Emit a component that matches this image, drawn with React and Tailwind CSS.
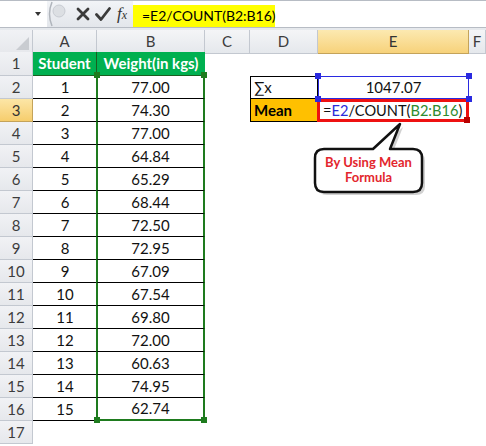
import React from 'react';

const weights = ['77.00', '74.30', '77.00', '64.84', '65.29', '68.44', '72.50', '72.95', '67.09', '67.54', '69.80', '72.00', '60.63', '74.95', '62.74'];
const cols = ['A', 'B', 'C', 'D', 'E', 'F'];
const rows = Array.from({ length: 17 }, (_, i) => i + 1);

const gridCols = 'grid grid-cols-[33px_64px_108px_45px_68px_151px_1fr]';

const FormulaBar = () => (
    <div className="flex h-[28px] border-t border-b border-[#b7bcc4] bg-white">
        {/* name box */}
        <div className="flex items-center justify-end w-[47px] pr-[6px] bg-white">
            <div className="w-0 h-0 border-l-[3px] border-r-[3px] border-t-[4px] border-l-transparent border-r-transparent border-t-[#333]" />
        </div>
        {/* buttons */}
        <div className="flex items-center gap-[5px] w-[86px] bg-linear-to-b from-[#f2f4f7] to-[#e3e6eb]">
            <svg width="20" height="26" viewBox="0 0 20 26">
                <path d="M5 1 Q0 13 5 25" stroke="#b0b5bc" strokeWidth="1.5" fill="none" />
                <circle cx="12" cy="10" r="6" fill="#dcdfe3" stroke="#c8ccd2" />
            </svg>
            <svg width="14" height="14" viewBox="0 0 14 14" className="ml-[4px]">
                <path d="M2 2 L12 12 M12 2 L2 12" stroke="#3a3a3a" strokeWidth="2.8" strokeLinecap="round" />
            </svg>
            <svg width="16" height="14" viewBox="0 0 16 14">
                <path d="M1.5 7.5 L6 12.5 L14.5 1.5" stroke="#3a3a3a" strokeWidth="2.8" fill="none" strokeLinecap="round" strokeLinejoin="round" />
            </svg>
            <span className="ml-[1px] font-['Liberation_Serif',serif] italic text-[17px] text-[#333] leading-[22px]">
                f<span className="text-[12px]">x</span>
            </span>
        </div>
        {/* formula input */}
        <div className="flex-1 flex items-end bg-white">
            <div className="h-[22px] w-[142px] bg-[#ffff00] pl-[9px] text-[14px] leading-[22px] text-black">=E2/COUNT(B2:B16)</div>
        </div>
    </div>
);

const ColHeader = ({ c }) => (
    <div className={c === 'E'
        ? 'flex items-center justify-center border-r border-b border-[#c4a35a] bg-linear-to-b from-[#fce9b0] to-[#f7d27a] text-[15px] text-[#333]'
        : 'flex items-center justify-center border-r border-b border-[#c3c8d0] bg-linear-to-b from-[#f4f5f7] to-[#e5e8ec] text-[15px] text-[#3c3c3c]'}>
        {c}
    </div>
);

const RowHead = ({ n }) => (
    <div className={n === 3
        ? 'flex items-center justify-center border-r border-b border-[#c4a35a] bg-linear-to-b from-[#fce6a6] to-[#f6cd6c] text-[15px] text-[#333]'
        : 'flex items-center justify-center border-r border-b border-[#c3c8d0] bg-linear-to-b from-[#f1f2f5] to-[#e6e8ec] text-[15px] text-[#3c3c3c]'}>
        {n}
    </div>
);

// small square handle of a reference outline
const Handle = ({ pos, color }) => {
    const place = {
        tl: '-left-[4px] -top-[4px]',
        tr: '-right-[4px] -top-[4px]',
        bl: '-left-[4px] -bottom-[4px]',
        br: '-right-[4px] -bottom-[4px]',
    }[pos];
    return <div className={`absolute z-10 w-[6px] h-[6px] ${place} ${color}`} />;
};

const Cells = ({ r }) => {
    const inTable = r >= 2 && r <= 16;
    return (
        <>
            {/* A */}
            {r === 1 ? (
                <div className="flex items-center justify-center bg-[#00b050] border-r border-b border-[#1b5e20] text-white font-bold text-[15px]">Student</div>
            ) : inTable ? (
                <div className="flex items-center justify-center border-b border-black text-[15px] text-[#111]">{r - 1}</div>
            ) : <div />}
            {/* B - green reference outline B2:B16 */}
            {r === 1 ? (
                <div className="flex items-center justify-center bg-[#00b050] border-b border-[#1b5e20] text-white font-bold text-[15px]">Weight(in kgs)</div>
            ) : inTable ? (
                <div className={r === 16
                    ? 'relative -ml-[1px] flex items-center justify-center border-x-2 border-b-2 border-[#1e7b1e] text-[15px] text-[#111]'
                    : 'relative -ml-[1px] flex items-center justify-center border-x-2 border-b border-x-[#1e7b1e] border-b-black text-[15px] text-[#111]'}>
                    {r === 2 && <><Handle pos="tl" color="bg-[#1e7b1e]" /><Handle pos="tr" color="bg-[#1e7b1e]" /></>}
                    {r === 16 && <><Handle pos="bl" color="bg-[#1e7b1e]" /><Handle pos="br" color="bg-[#1e7b1e]" /></>}
                    {weights[r - 2]}
                </div>
            ) : <div />}
            {/* C */}
            <div />
            {/* D */}
            {r === 2 ? (
                <div className="flex items-center pl-[3px] border border-black text-[15px] text-[#111]">∑x</div>
            ) : r === 3 ? (
                <div className="flex items-center pl-[3px] border-x border-b border-black bg-[#ffc000] font-bold text-[15px] text-black">Mean</div>
            ) : <div />}
            {/* E */}
            {r === 2 ? (
                <div className="relative flex items-center justify-center border border-[#2a2ae0] text-[15px] text-[#111]">
                    <Handle pos="tl" color="bg-[#2a2ae0]" />
                    <Handle pos="tr" color="bg-[#2a2ae0]" />
                    <Handle pos="bl" color="bg-[#2a2ae0]" />
                    <Handle pos="br" color="bg-[#2a2ae0]" />
                    1047.07
                </div>
            ) : r === 3 ? (
                <div className="relative -ml-[1px] flex items-center pl-[3px] border-[3px] border-[#ee1111] text-[14.6px] text-[#111]">
                    <Handle pos="br" color="bg-[#b80000]" />
                    =<span className="text-[#2b2bd9]">E2</span>/COUNT(<span className="text-[#2e8b2e]">B2:B16</span>)
                </div>
            ) : <div />}
            {/* F */}
            <div />
        </>
    );
};

const Callout = () => (
    <div className="absolute left-[312px] top-[120px] w-[118px] h-[80px]">
        <svg width="118" height="80" className="absolute left-0 top-0">
            <path
                d="M12 29 L61 29 L88 4 L78 29 L101 29 Q110 29 110 38 L110 63 Q110 72 101 72 L12 72 Q3 72 3 63 L3 38 Q3 29 12 29 Z"
                fill="#9a9a9a"
                opacity="0.45"
                transform="translate(3 3)"
            />
            <path
                d="M12 29 L61 29 L88 4 L78 29 L101 29 Q110 29 110 38 L110 63 Q110 72 101 72 L12 72 Q3 72 3 63 L3 38 Q3 29 12 29 Z"
                fill="white"
                stroke="#111"
                strokeWidth="2.5"
                strokeLinejoin="round"
            />
        </svg>
        <div className="relative pt-[35px] w-[113px] text-center font-bold text-[13px] leading-[15px] text-[#e3262d]">
            <div>By Using Mean</div>
            <div>Formula</div>
        </div>
    </div>
);

const App = () => {
    return (
        <div className="relative w-[486px] h-[446px] overflow-hidden bg-white font-['Lato',sans-serif]">
            <FormulaBar />
            <div className="h-[2px] bg-[#e6e9ed]" />

            {/* column headers */}
            <div className={`${gridCols} h-[22px]`}>
                <div className="flex items-end justify-end p-[3px] border-r border-b border-[#c3c8d0] bg-linear-to-b from-[#f1f2f5] to-[#e6e8ec]">
                    <div className="w-0 h-0 border-l-[13px] border-b-[13px] border-l-transparent border-b-[#c9ccd1]" />
                </div>
                {cols.map(c => <ColHeader key={c} c={c} />)}
            </div>

            {/* body */}
            <div className={`${gridCols} grid-rows-[24px_repeat(16,23px)]`}>
                {rows.map(r => (
                    <React.Fragment key={r}>
                        <RowHead n={r} />
                        <Cells r={r} />
                    </React.Fragment>
                ))}
            </div>

            <Callout />
        </div>
    );
};

export default App;
